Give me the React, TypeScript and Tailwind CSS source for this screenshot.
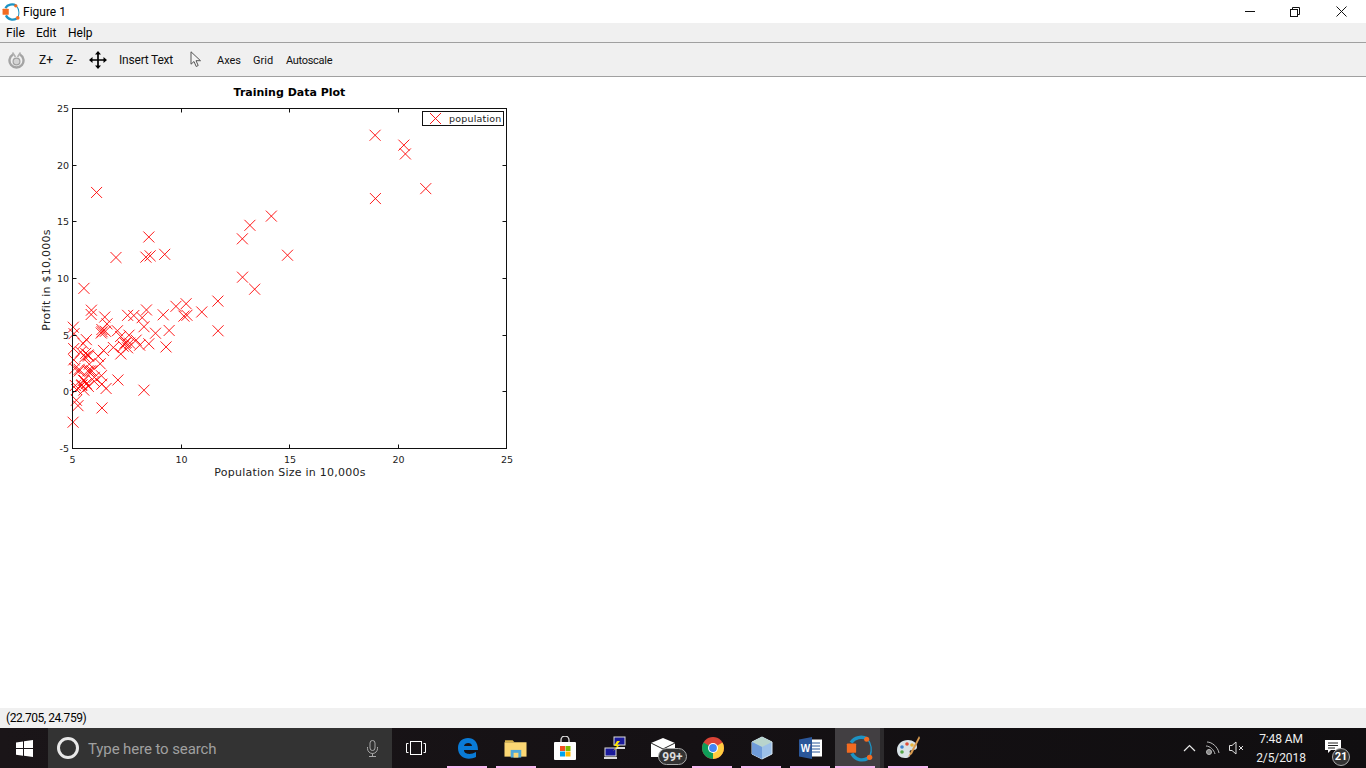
import React from "react";

const DATA: [number, number][] = [[6.1101,17.592],[5.5277,9.1302],[8.5186,13.662],[7.0032,11.854],[5.8598,6.8233],[8.3829,11.886],[7.4764,4.3483],[8.5781,12],[6.4862,6.5987],[5.0546,3.8166],[5.7107,3.2522],[14.164,15.505],[5.734,3.1551],[8.4084,7.2258],[5.6407,0.71618],[5.3794,3.5129],[6.3654,5.3048],[5.1301,0.56077],[6.4296,3.6518],[7.0708,5.3893],[6.1891,3.1386],[20.27,21.767],[5.4901,4.263],[6.3261,5.1875],[5.5649,3.0825],[18.945,22.638],[12.828,13.501],[10.957,7.0467],[13.176,14.692],[5.2524,-1.22],[6.5894,5.9966],[9.2482,12.134],[5.8918,1.8495],[8.2111,6.5426],[7.9334,4.5623],[8.0959,4.1164],[5.6063,3.3928],[12.836,10.117],[6.3534,5.4974],[5.4069,0.55657],[6.8825,3.9115],[11.708,5.3854],[5.7737,2.4406],[7.8247,6.7318],[7.0931,1.0463],[5.0702,5.1337],[5.8014,1.844],[11.7,8.0043],[5.5416,1.0179],[7.5402,6.7504],[5.3077,1.8396],[7.4239,4.2885],[7.6031,4.9981],[6.3328,1.4233],[6.3589,-1.4211],[6.2742,2.4756],[5.6397,4.6042],[9.3102,3.9624],[9.4536,5.4141],[8.8254,5.1694],[5.1793,-0.74279],[21.279,17.929],[14.908,12.054],[18.959,17.054],[7.2182,4.8852],[8.2951,5.7442],[10.236,7.7754],[5.4994,1.0173],[20.341,20.992],[10.136,6.6799],[7.3345,4.0259],[6.0062,1.2784],[7.2259,3.3411],[5.0269,-2.6807],[6.5479,0.29678],[7.5386,3.8845],[5.0365,5.7014],[10.274,6.7526],[5.1077,2.0576],[5.7292,0.47953],[5.1884,0.20421],[6.3557,0.67861],[9.7687,7.5435],[6.5159,5.3436],[8.5172,4.2415],[9.1802,6.7981],[6.002,0.92695],[5.5204,0.152],[5.0594,2.8214],[5.7077,1.8451],[7.6366,4.2959],[5.8707,7.2029],[5.3054,1.9869],[8.2934,0.14454],[13.394,9.0551],[5.4369,0.61705]];

const L = 72.5, R = 506.5, T = 108.5, B = 448.5;
const px = (x: number) => L + ((x - 5) / 20) * (R - L);
const py = (y: number) => B - ((y + 5) / 30) * (B - T);

function Cross({ x, y, r = 5.5 }: { x: number; y: number; r?: number }) {
  return <path d={`M${x - r} ${y - r}L${x + r} ${y + r}M${x - r} ${y + r}L${x + r} ${y - r}`} stroke="#ff0000" strokeWidth={0.9} fill="none" />;
}

function OctaveLogo({ size }: { size: number }) {
  return (
    <svg width={size} height={size} viewBox="0 0 32 32" className="shrink-0">
      <path d="M6 9C10 2.500 19 1 25 4.500" stroke="#1d93c4" strokeWidth="4" fill="none" />
      <path d="M25.500 5C30 10 31 18 28.500 25" stroke="#1d93c4" strokeWidth="1.800" fill="none" />
      <path d="M26 27.500C20 31 11 30 7 22" stroke="#1d93c4" strokeWidth="4" fill="none" />
      <rect x="1" y="10" width="11" height="11" rx="1" fill="#f26b21" />
      <circle cx="24.500" cy="5" r="3" fill="#f26b21" />
      <circle cx="28" cy="26.500" r="3.200" fill="#f26b21" />
    </svg>
  );
}

function Plot() {
  const font = { fontFamily: "'DejaVu Sans', sans-serif" };
  const xt = [5, 10, 15, 20, 25];
  const yt = [-5, 0, 5, 10, 15, 20, 25];
  return (
    <svg width={520} height={403} viewBox="0 77 520 403" className="block" style={font}>
      <text x="289.500" y="95.500" textAnchor="middle" fontSize="11" fontWeight="700" fill="#000">Training Data Plot</text>
      {DATA.map(([x, y], i) => <Cross key={i} x={px(x)} y={py(y)} />)}
      <rect x={L} y={T} width={R - L} height={B - T} fill="none" stroke="#111" strokeWidth="1" />
      {xt.map((v) => (
        <g key={v}>
          <path d={`M${Math.floor(px(v)) + 0.5} ${B}v-4M${Math.floor(px(v)) + 0.5} ${T}v4`} stroke="#111" />
          <text x={px(v) + (v === 5 ? 0 : 0.5)} y="462.500" textAnchor="middle" fontSize="9.500" fill="#222">{v}</text>
        </g>
      ))}
      {yt.map((v) => (
        <g key={v}>
          <path d={`M${L} ${Math.floor(py(v)) + 0.5}h4M${R} ${Math.floor(py(v)) + 0.5}h-4`} stroke="#111" />
          <text x="69" y={py(v) + 3.500} textAnchor="end" fontSize="9.500" fill="#222">{v}</text>
        </g>
      ))}
      <text x="290" y="475.500" textAnchor="middle" fontSize="11" letterSpacing="0.24" fill="#222">Population Size in 10,000s</text>
      <text transform="translate(49.500 280) rotate(-90)" textAnchor="middle" fontSize="11" letterSpacing="0.24" fill="#222">Profit in $10,000s</text>
      <rect x="422.500" y="111.500" width="81" height="14" fill="#fff" stroke="#111" />
      <Cross x={435.500} y={118.500} />
      <text x="449" y="122" fontSize="9.500" letterSpacing="0.2" fill="#222">population</text>
    </svg>
  );
}

function Toolbar() {
  return (
    <div className="flex h-[33px] items-center bg-[#f0f0f0] text-[12px] text-[#111]">
      <svg width="17" height="18" viewBox="0 0 17 18" className="ml-[8px] shrink-0" fill="none">
        <path d="M5 3.500A7 7 0 1 0 12 3.500" stroke="#a4a4a4" strokeWidth="2.400" />
        <path d="M4.500 1.500l3 4.500M12.500 1.500L9.500 6" stroke="#b0b0b0" strokeWidth="1.600" />
        <circle cx="8.500" cy="10.500" r="3.400" fill="#d4d4d4" stroke="#a0a0a0" strokeWidth="1.200" />
      </svg>
      <span className="ml-[14px] w-[14px]">Z+</span>
      <span className="ml-[13px] w-[11px]">Z-</span>
      <svg width="18" height="18" viewBox="0 0 18 18" className="ml-[12px] shrink-0">
        <path d="M9 1.500v15M1.500 9h15" stroke="#000" strokeWidth="1.700" />
        <path d="M9 0l3 3.500H6zM9 18l3-3.500H6zM0 9l3.500-3v6zM18 9l-3.500-3v6z" fill="#000" />
      </svg>
      <span className="ml-[12px] w-[55px] whitespace-nowrap tracking-[-0.2px]">Insert Text</span>
      <svg width="12" height="17" viewBox="0 0 12 17" className="ml-[16px] shrink-0">
        <path d="M1 .8v12.400l3-2.700 2.200 5 2-1-2.200-4.800h4.500z" fill="#f4f4f4" stroke="#555" strokeWidth="1" />
      </svg>
      <span className="ml-[15px] w-[25px] pt-[3px] text-[11px]">Axes</span>
      <span className="ml-[11px] w-[20px] pt-[3px] text-[11px]">Grid</span>
      <span className="ml-[13px] pt-[3px] text-[11px] tracking-[-0.3px]">Autoscale</span>
    </div>
  );
}

function TaskIcon({ children, on, active }: { children: React.ReactNode; on?: boolean; active?: boolean }) {
  return (
    <div className={`relative flex h-full w-[49px] shrink-0 items-center justify-center ${active ? "bg-[#423f42]" : ""}`}>
      {children}
      {on ? <div className="absolute bottom-0 left-[4px] h-[2px] w-[40px] bg-[#f7b8f0]" /> : null}
    </div>
  );
}

function Taskbar() {
  return (
    <div className="flex h-[40px] items-center bg-gradient-to-r from-[#1a1518] via-[#151114] to-[#100e10] text-white" style={{ fontFamily: "Roboto, sans-serif" }}>
      <div className="flex h-full w-[48px] shrink-0 items-center justify-center">
        <svg width="17" height="17" viewBox="0 0 17 17"><path d="M0 2.400l7-1v6.700H0zM8 1.200L17 0v8.100H8zM0 9h7v6.700l-7-1zM8 9h9v8l-9-1.200z" fill="#fff" /></svg>
      </div>
      <div className="flex h-full w-[344px] shrink-0 items-center bg-[#333333] pl-[9px] pr-[13px]">
        <div className="h-[22px] w-[22px] rounded-full border-[3px] border-[#e8e8e8]" />
        <span className="ml-[9px] flex-1 pt-[2px] text-[15px] tracking-[-0.1px] text-[#a0a0a0]">Type here to search</span>
        <svg width="13" height="17" viewBox="0 0 13 17" fill="none" stroke="#a8a8a8"><rect x="4" y="0.500" width="5" height="10" rx="2.500" /><path d="M1.500 7v1.500a5 5 0 0 0 10 0V7M6.500 13.500v3M3 16.500h7" /></svg>
      </div>
      <div className="flex h-full w-[51px] shrink-0 items-center justify-center pr-[4px]">
        <svg width="20" height="14" viewBox="0 0 20 14" fill="none" stroke="#fff"><rect x="4.500" y="0.500" width="11" height="13" /><path d="M2.500 2.500H.5v9h2M17.500 2.500h2v9h-2" /></svg>
      </div>
      <TaskIcon on>
        <svg width="22" height="22" viewBox="0 0 22 22"><path d="M1 11C1 4.500 5.500 1 11 1c6 0 10 4 10 12H7c0 4.500 7 5 12 2v5c-8 4-18 1-18-9zm6-2h8c0-4-7.500-4-8 0z" fill="#0a7bd6" /></svg>
      </TaskIcon>
      <TaskIcon on>
        <div className="pr-[2px]">
          <svg width="23" height="20" viewBox="0 0 24 20" className="block"><path d="M1 2h8l2 2h-10z" fill="#d8b34c" /><rect x="0.500" y="4" width="23" height="15" fill="#fbd774" /><rect x="7" y="12" width="11" height="8" fill="#4fa8d8" /><rect x="10" y="15" width="5" height="5" fill="#fbd774" /></svg>
        </div>
      </TaskIcon>
      <TaskIcon>
        <div className="pr-[2px]">
          <svg width="24" height="25" viewBox="0 0 24 25" className="block"><path d="M8 7V4a4 4 0 0 1 8 0v3" fill="none" stroke="#ddd" strokeWidth="1.300" /><rect x="1" y="6" width="22" height="18" rx="1" fill="#fff" /><rect x="7" y="10" width="5" height="5" fill="#f25022" /><rect x="12.500" y="10" width="5" height="5" fill="#7fba00" /><rect x="7" y="15.500" width="5" height="5" fill="#00a4ef" /><rect x="12.500" y="15.500" width="5" height="5" fill="#ffb900" /></svg>
        </div>
      </TaskIcon>
      <TaskIcon>
        <svg width="24" height="24" viewBox="0 0 24 24"><rect x="11" y="1" width="11" height="8" fill="#1a1a9a" stroke="#ddd" /><rect x="13" y="11" width="9" height="2" fill="#ddd" /><rect x="2" y="12" width="11" height="8" fill="#1a1a9a" stroke="#ddd" /><rect x="1" y="21" width="13" height="2" fill="#ddd" /><path d="M14 5l-3 5h3l-4 5 7-6h-3l3-4z" fill="#ffe600" /></svg>
      </TaskIcon>
      <TaskIcon>
        <div className="relative h-full w-full">
          <svg width="24" height="19" viewBox="0 0 24 19" className="absolute left-[12px] top-[10px]"><path d="M0 5L12 0l12 5v14H0z" fill="#fff" /><path d="M0 5l12 6 12-6" fill="none" stroke="#222" strokeWidth="1" /></svg>
          <div className="absolute left-[19px] top-[20px] flex h-[17px] w-[29px] items-center justify-center rounded-full border border-[#aaa] bg-[#333] text-[12px] font-bold text-[#ddd]">99+</div>
        </div>
      </TaskIcon>
      <TaskIcon on>
        <svg width="22" height="22" viewBox="0 0 22 22"><circle cx="11" cy="11" r="11" fill="#db4437" /><path d="M11 11L1.500 5.500A11 11 0 0 0 11 22z" fill="#0f9d58" /><path d="M11 11V22A11 11 0 0 0 20.500 5.500z" fill="#ffcd40" /><circle cx="11" cy="11" r="5" fill="#fff" /><circle cx="11" cy="11" r="3.900" fill="#4285f4" /></svg>
      </TaskIcon>
      <TaskIcon on>
        <svg width="22" height="24" viewBox="0 0 22 24"><path d="M11 1l10 5v12l-10 5-10-5V6z" fill="#9cc0e8" stroke="#d8e8f4" /><path d="M11 1l10 5-10 5L1 6z" fill="#b8d4cc" /><path d="M11 11v12L1 18V6z" fill="#6f9bd8" /></svg>
      </TaskIcon>
      <TaskIcon on>
        <svg width="23" height="22" viewBox="0 0 23 22"><rect x="8" y="2.500" width="15" height="17" fill="#fff" /><path d="M12 6h9M12 9h9M12 12h9M12 15h9" stroke="#2b579a" /><path d="M0 2.500L13 0v22L0 19.500z" fill="#2b579a" /><text x="6.500" y="15" textAnchor="middle" fontSize="10" fontWeight="700" fill="#fff" fontFamily="'Liberation Sans', sans-serif">W</text></svg>
      </TaskIcon>
      <div className="relative flex h-full w-[45px] shrink-0 items-center justify-center bg-[#423f42] pl-[4px]">
        <OctaveLogo size={27} />
        <div className="absolute bottom-0 left-0 h-[2px] w-[40px] bg-[#f7b8f0]" />
      </div>
      <div className="h-full w-[4px] shrink-0 bg-[#2c2a2c]" />
      <div className="relative flex h-full w-[49px] shrink-0 items-center justify-center pr-[2px]">
        <svg width="24" height="24" viewBox="0 0 24 24"><path d="M1 14C1 8 6 4 12 4c5 0 9 3 9 7 0 3-3 3-5 3s-3 1-2 3c1 3-1 5-5 5-5 0-8-3-8-8z" fill="#d8e2e6" /><circle cx="6" cy="11" r="1.800" fill="#3b82d0" /><circle cx="11" cy="8" r="1.800" fill="#e04f3a" /><circle cx="16" cy="9" r="1.800" fill="#e8b53a" /><circle cx="6" cy="16" r="1.800" fill="#53a447" /><path d="M23 0l-9 17-2 4 4-3 8-16z" fill="#d89a50" /></svg>
        <div className="absolute bottom-0 left-[4px] h-[2px] w-[40px] bg-[#f7b8f0]" />
      </div>
      <div className="ml-auto flex h-full items-center">
        <svg width="13" height="8" viewBox="0 0 13 8" fill="none" stroke="#e8e8e8" strokeWidth="1.200"><path d="M1 7l5.500-5.500L12 7" /></svg>
        <svg width="16" height="16" viewBox="0 0 16 16" className="ml-[9px]" fill="none" stroke="#bbb"><path d="M2 2c5 0 11 5 12 11" /><path d="M1 6c4 0 8 4 9 8" /><circle cx="4" cy="12" r="2.500" fill="#888" /></svg>
        <svg width="16" height="14" viewBox="0 0 16 14" className="ml-[8px]" fill="none" stroke="#ddd"><path d="M.5 4.500h2.500L7 1v12L3 9.500H.5z" /><path d="M10 5l4 4M14 5l-4 4" /></svg>
        <div className="flex w-[72px] flex-col items-center pt-[2px] text-[12px] leading-[19px] tracking-[-0.1px] text-[#eee]">
          <span>7:48 AM</span>
          <span>2/5/2018</span>
        </div>
        <div className="relative ml-[7px] mr-[15px] h-full w-[27px]">
          <svg width="16" height="13" viewBox="0 0 16 13" className="absolute left-[1px] top-[12px]"><path d="M0 0h16v10H6l-3 3v-3H0z" fill="#fff" /><path d="M3 3h10M3 5.500h10M3 8h7" stroke="#222" /></svg>
          <div className="absolute left-[8px] top-[20px] flex h-[18px] w-[18px] items-center justify-center rounded-full border border-[#aaa] bg-[#333] text-[11px] font-bold text-white">21</div>
        </div>
      </div>
    </div>
  );
}

export default function App() {
  return (
    <div className="flex h-screen w-[1366px] flex-col overflow-hidden bg-white" style={{ fontFamily: "Roboto, sans-serif" }}>
      <div className="flex h-[23px] shrink-0 items-center bg-white">
        <div className="ml-[2px]"><OctaveLogo size={18} /></div>
        <span className="ml-[3px] text-[12px] text-black">Figure 1</span>
        <div className="ml-auto flex items-center">
          <svg width="10" height="1" viewBox="0 0 10 1" className="mr-[35px]"><path d="M0 .5h10" stroke="#111" /></svg>
          <svg width="10" height="10" viewBox="0 0 10 10" fill="none" stroke="#111" className="mr-[36px]"><rect x="0.500" y="2.500" width="7" height="7" /><path d="M2.500 2.500v-2h7v7h-2" /></svg>
          <svg width="11" height="11" viewBox="0 0 11 11" fill="none" stroke="#111" className="mr-[19px]"><path d="M.5.500l10 10M10.500.500l-10 10" /></svg>
        </div>
      </div>
      <div className="flex h-[19px] shrink-0 items-center bg-[#f0f0f0] pl-[6px] text-[12px] text-black">
        <span className="w-[30px]">File</span><span className="w-[32px]">Edit</span><span>Help</span>
      </div>
      <div className="h-px shrink-0 bg-[#a0a0a0]" />
      <Toolbar />
      <div className="h-px shrink-0 bg-[#a0a0a0]" />
      <div className="min-h-0 flex-1"><Plot /></div>
      <div className="flex h-[20px] shrink-0 items-center bg-[#f0f0f0] pl-[6px] text-[12px] tracking-[-0.45px] text-black">(22.705, 24.759)</div>
      <Taskbar />
    </div>
  );
}
